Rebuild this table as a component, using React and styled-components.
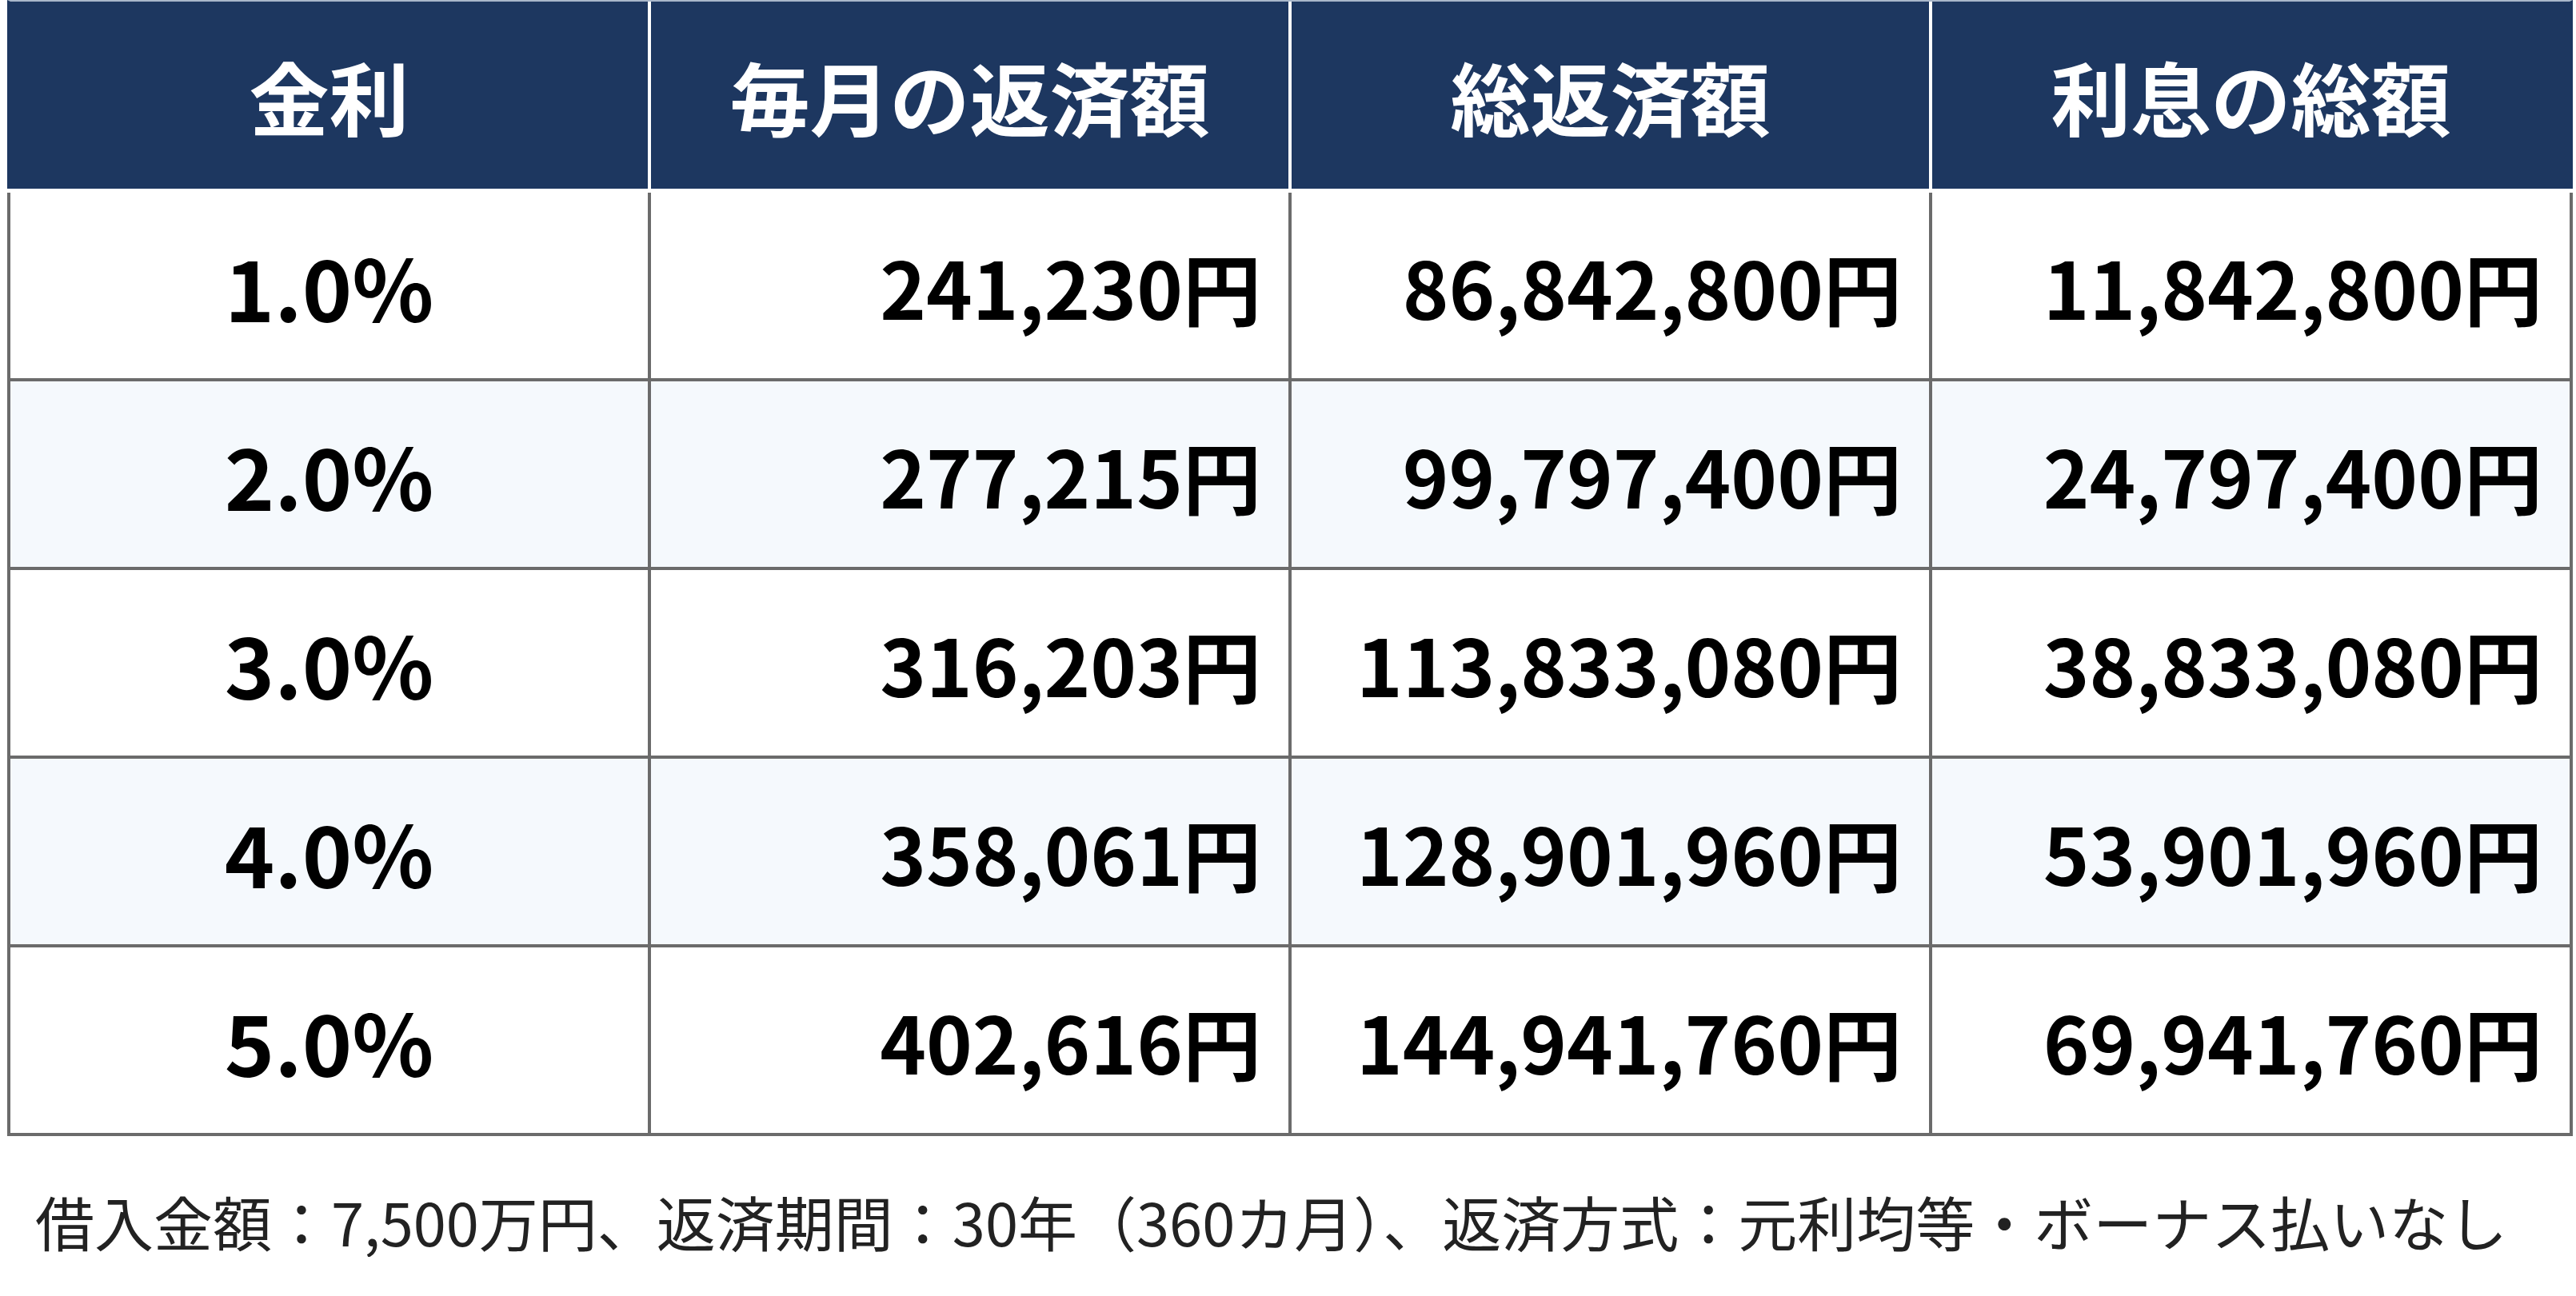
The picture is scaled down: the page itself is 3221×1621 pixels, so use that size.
import styled, { createGlobalStyle } from "styled-components";

const GlobalStyle = createGlobalStyle`
  html, body {
    margin: 0;
    padding: 0;
    background: #ffffff;
  }
  body {
    font-family: "Noto Sans CJK JP", "Noto Sans", sans-serif;
    color: #000000;
  }
`;

const Page = styled.div`
  padding: 0 0 0 9px;
  width: 3208px;
`;

const HeaderRow = styled.div`
  display: grid;
  grid-template-columns: repeat(4, 1fr);
  column-gap: 4px;
  background: #ffffff;
  border-top: 2px solid #a9b7ca;
  border-left: 4px solid #1d3760;
  border-right: 4px solid #1d3760;
  margin-bottom: 5px;
`;

const HeadCell = styled.div`
  height: 234px;
  background: #1d3760;
  color: #ffffff;
  font-size: 100px;
  font-weight: 700;
  display: flex;
  align-items: center;
  justify-content: center;
`;

const Body = styled.div`
  display: grid;
  grid-template-columns: repeat(4, 1fr);
  gap: 4px;
  background: #6b6b6b;
  padding: 0 4px 4px 4px;
`;

const Cell = styled.div`
  height: 232px;
  background: ${(p) => (p.$alt ? "#f5f9fd" : "#ffffff")};
  display: flex;
  align-items: center;
  justify-content: ${(p) => (p.$rate ? "center" : "flex-end")};
  padding-right: ${(p) => (p.$rate ? "0" : "34px")};
  font-size: ${(p) => (p.$rate ? "106px" : "98px")};
  font-weight: 700;
  color: #000000;
  box-sizing: border-box;
`;

const Note = styled.p`
  margin: 62px 0 0 44px;
  font-size: 74px;
  line-height: 1.2;
  font-weight: 400;
  color: #222222;
  white-space: nowrap;
`;

const headers = ["金利", "毎月の返済額", "総返済額", "利息の総額"];

const rows = [
  ["1.0%", "241,230円", "86,842,800円", "11,842,800円"],
  ["2.0%", "277,215円", "99,797,400円", "24,797,400円"],
  ["3.0%", "316,203円", "113,833,080円", "38,833,080円"],
  ["4.0%", "358,061円", "128,901,960円", "53,901,960円"],
  ["5.0%", "402,616円", "144,941,760円", "69,941,760円"],
];

export default function App() {
  return (
    <>
      <GlobalStyle />
      <Page>
        <HeaderRow>
          {headers.map((h) => (
            <HeadCell key={h}>{h}</HeadCell>
          ))}
        </HeaderRow>
        <Body>
          {rows.map((row, i) =>
            row.map((v, j) => (
              <Cell key={`${i}-${j}`} $alt={i % 2 === 1} $rate={j === 0}>
                {v}
              </Cell>
            ))
          )}
        </Body>
      </Page>
      <Note>
        借入金額：7,500万円、返済期間：30年（360カ月）、返済方式：元利均等・ボーナス払いなし
      </Note>
    </>
  );
}
